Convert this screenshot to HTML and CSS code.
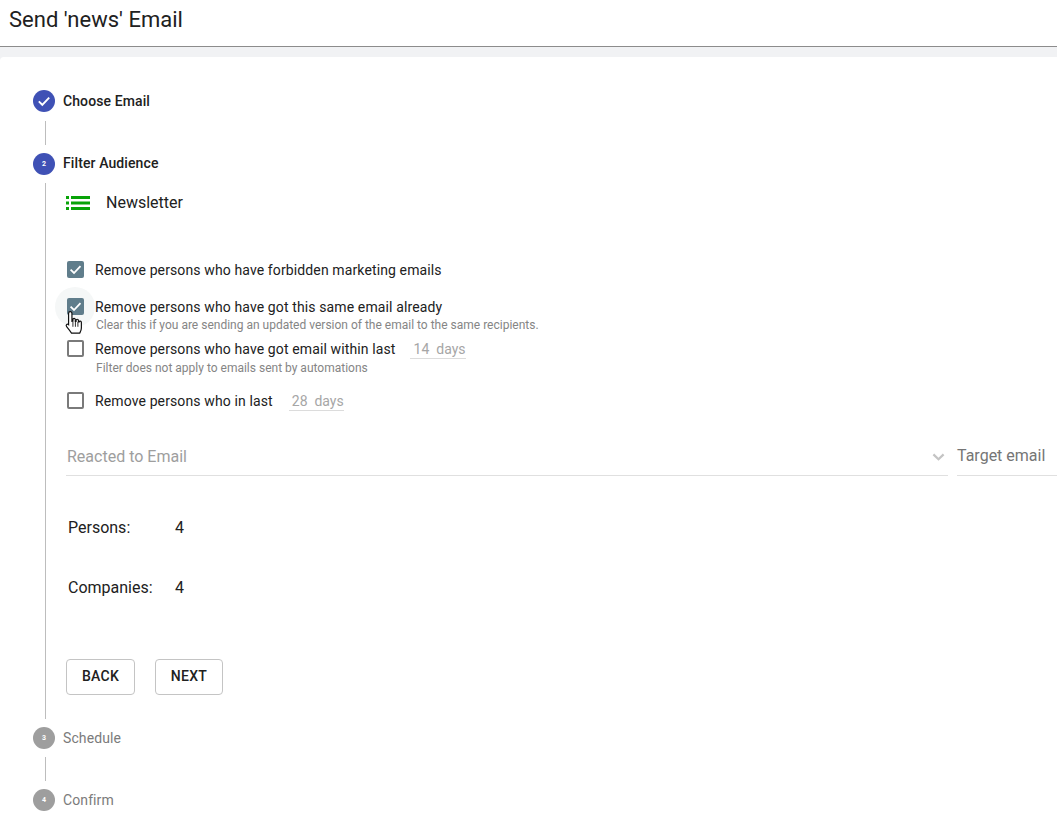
FILE: index.html
```html
<!DOCTYPE html>
<html lang="en">
<head>
<meta charset="utf-8">
<title>Send 'news' Email</title>
<link rel="stylesheet" href="styles.css">
</head>
<body>
<header class="topbar"><h1 class="title">Send 'news' Email</h1></header>
<div class="band"></div>
<main class="card">
  <div class="step">
    <span class="dot dot-active"><svg class="check-icon" viewBox="0 0 14 14"><path d="M1.8 7.4 5.3 10.8 12.2 3.6" fill="none" stroke="#fff" stroke-width="1.9"/></svg></span>
    <span class="step-label strong label-low">Choose Email</span>
  </div>
  <div class="connector"></div>
  <div class="step">
    <span class="dot dot-active">2</span>
    <span class="step-label strong">Filter Audience</span>
  </div>
  <section class="content">
    <div class="list-head">
      <svg class="list-icon" viewBox="0 0 24 14"><path d="M0 0h3v3H0zM5 0h19v3H5zM0 5.500h3v3H0zM5 5.500h19v3H5zM0 11h3v3H0zM5 11h19v3H5z" fill="#08a308"/></svg>
      <span class="list-name">Newsletter</span>
    </div>

    <div class="opt opt-first">
      <span class="box box-on"><svg viewBox="0 0 17 17"><path d="M3.600 8.700 7 12 13.500 5.100" fill="none" stroke="#fff" stroke-width="1.800"/></svg></span>
      <span class="opt-text">Remove persons who have forbidden marketing emails</span>
    </div>

    <div class="opt opt-second">
      <span class="halo"></span>
      <span class="box box-on"><svg viewBox="0 0 17 17"><path d="M3.600 8.700 7 12 13.500 5.100" fill="none" stroke="#fff" stroke-width="1.800"/></svg></span>
      <span class="opt-text">Remove persons who have got this same email already</span>
      <svg class="cursor" viewBox="0 0 18 24"><path d="M5.500 1.500c1 0 1.600.7 1.600 1.700v7.200l.9-.1V8.700c0-1.400 2.100-1.400 2.200 0v1.900h.7V9.500c.1-1.300 2.100-1.300 2.200.1v1.500h.6c.2-1.100 2-1 2.100.3v5.100c0 2.300-.8 3.400-1.500 4.800H6.700c-.9-1.400-2.500-3.500-4.500-6-1.100-1.400.4-3 1.700-1.900l.1.100V3.200c0-1 .6-1.700 1.500-1.700z" fill="#fff" stroke="#111" stroke-width="1.100"/><path d="M8 11v4.500M10.300 11v4.500M12.600 11v4.500" stroke="#111" stroke-width=".8" fill="none"/></svg>
    </div>
    <p class="hint hint-a">Clear this if you are sending an updated version of the email to the same recipients.</p>

    <div class="opt opt-third">
      <span class="box"></span>
      <span class="opt-text">Remove persons who have got email within last</span>
      <span class="days days-14">14&nbsp;&nbsp;days</span>
    </div>
    <p class="hint hint-b">Filter does not apply to emails sent by automations</p>

    <div class="opt opt-fourth">
      <span class="box"></span>
      <span class="opt-text">Remove persons who in last</span>
      <span class="days days-28">28&nbsp;&nbsp;days</span>
    </div>

    <div class="selects">
      <div class="select-main"><span>Reacted to Email</span><svg class="chevron" viewBox="0 0 14 8"><path d="M1.500 1.200 7 6.500 12.500 1.200" fill="none" stroke="#c4c4c4" stroke-width="2.400"/></svg></div>
      <div class="select-target">Target email</div>
    </div>

    <dl class="stats">
      <dt>Persons:</dt><dd>4</dd>
      <dt>Companies:</dt><dd>4</dd>
    </dl>

    <div class="actions">
      <button class="btn btn-back" type="button">BACK</button>
      <button class="btn btn-next" type="button">NEXT</button>
    </div>
  </section>
  <div class="step">
    <span class="dot dot-idle">3</span>
    <span class="step-label label-low">Schedule</span>
  </div>
  <div class="connector connector-last"></div>
  <div class="step">
    <span class="dot dot-idle">4</span>
    <span class="step-label label-low">Confirm</span>
  </div>
</main>
</body>
</html>
```
FILE: styles.css
```css
* { box-sizing: border-box; }
html, body { margin: 0; padding: 0; height: 100%; overflow: hidden; }
body { background: #fff; color: #212121; font-family: Roboto, "Liberation Sans", sans-serif; }

.topbar { height: 47px; border-bottom: 1px solid #8c8c8c; display: flex; align-items: center; padding: 0 0 6px 9px; }
.title { margin: 0; font-size: 22px; font-weight: 400; line-height: 28px; color: #212121; }
.band { height: 14px; background: #f1f2f4; }
.card { position: relative; background: #fff; border-top-left-radius: 4px; margin-top: -4px; padding: 33px 0 0 33px; }

.step { display: flex; align-items: center; height: 22px; }
.dot { width: 22px; height: 22px; border-radius: 50%; display: flex; align-items: center; justify-content: center; color: #fff; font-size: 7px; font-weight: 700; }
.dot-active { background: #3f51b5; }
.dot-idle { background: #9e9e9e; }
.check-icon { width: 14px; height: 14px; }
.step-label { margin-left: 8px; font-size: 14px; color: #7b7b7b; line-height: 20px; margin-top: -2px; letter-spacing: .1px; }
.label-low { margin-top: 0; }
.strong { color: #212121; font-weight: 500; }

.connector { width: 1px; height: 24px; margin: 9px 0 8px 12px; background: #bdbdbd; }
.connector-last { margin-top: 8px; }
.content { margin: 8px 0 8px 12px; height: 536px; border-left: 1px solid #bdbdbd; padding: 10px 0 0 20px; }

.list-head { display: flex; align-items: center; height: 20px; }
.list-icon { width: 24px; height: 14px; flex: none; }
.list-name { margin-left: 16px; font-size: 16px; line-height: 20px; }

.opt { display: flex; align-items: center; position: relative; height: 20px; font-size: 14px; padding-left: 1px; }
.opt-first { margin-top: 47px; }
.opt-second { margin-top: 17px; }
.opt-third { margin-top: 7px; }
.opt-fourth { margin-top: 16px; }
.box { width: 17px; height: 17px; flex: none; border: 2px solid #7a7a7a; border-radius: 2px; background: #fff; position: relative; top: -1px; }
.box-on { border: 0; background: #607d8b; }
.box svg { display: block; width: 17px; height: 17px; }
.opt-text { margin-left: 11px; line-height: 20px; color: #212121; letter-spacing: .12px; }
.halo { position: absolute; left: -11px; top: -10px; width: 40px; height: 40px; border-radius: 50%; background: #f5f7f7; }
.cursor { position: absolute; left: -2px; top: 13px; width: 20px; height: 26px; }

.hint { margin: 0; font-size: 12px; line-height: 14px; color: #858585; padding-left: 30px; }
.hint-a { margin-top: 1px; }
.hint-b { margin-top: 2px; }

.days { font-size: 14px; color: #a6a6a6; border-bottom: 1px solid #dcdcdc; height: 20px; line-height: 20px; text-align: right; }
.days-14 { margin-left: 14px; width: 56px; }
.days-28 { margin-left: 16px; width: 55px; }

.selects { display: flex; margin-top: 29px; height: 36px; }
.select-main { width: 882px; flex: none; display: flex; align-items: center; justify-content: space-between; padding: 0 3px 2px 1px; border-bottom: 1px solid #e0e0e0; font-size: 16px; color: #9e9e9e; }
.chevron { width: 13px; height: 8px; }
.select-target { margin-left: 9px; width: 120px; flex: none; padding-bottom: 5px; display: flex; align-items: center; border-bottom: 1px solid #e0e0e0; font-size: 16px; color: #757575; white-space: nowrap; }

.stats { display: grid; grid-template-columns: 107px auto; grid-auto-rows: 20px; row-gap: 40px; margin: 42px 0 0 2px; font-size: 16px; line-height: 20px; }
.stats dt, .stats dd { margin: 0; }

.actions { display: flex; gap: 20px; margin-top: 61px; }
.btn { height: 36px; background: #fff; border: 1px solid #c4c4c4; border-radius: 4px; font-family: inherit; font-size: 14px; font-weight: 500; letter-spacing: .3px; color: #212121; padding: 0 0 2px; }
.btn-back { width: 69px; }
.btn-next { width: 68px; }
```
